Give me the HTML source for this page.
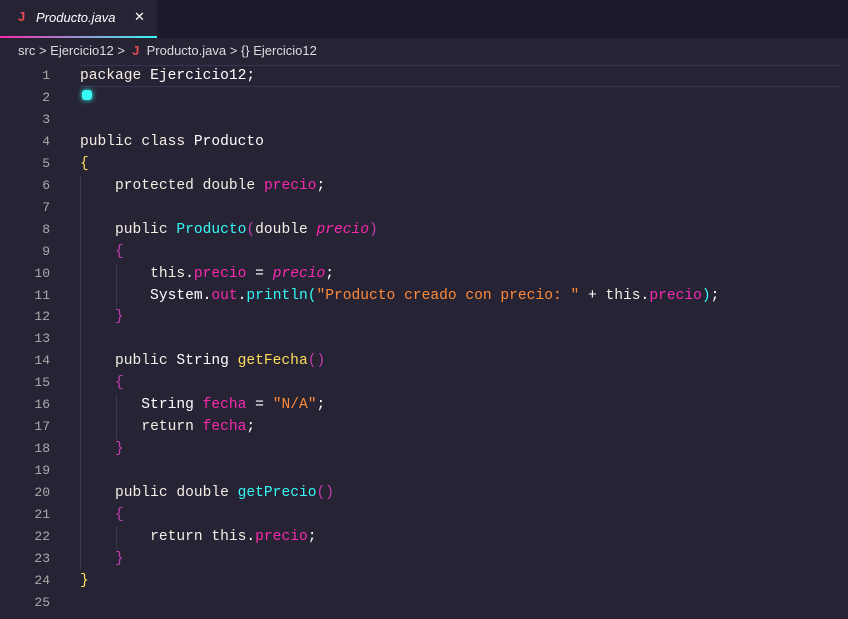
<!DOCTYPE html>
<html><head><style>
body{margin:0;width:848px;height:619px;background:#262335;overflow:hidden;font-family:"Liberation Mono",monospace;}
.tabs{position:absolute;left:0;top:0;width:848px;height:38px;background:#1e1a2c;}
.tab{position:absolute;left:0;top:0;width:157px;height:38px;background:#262335;}
.tab .ul{position:absolute;left:0;bottom:0;width:157px;height:2px;background:linear-gradient(90deg,#f92aad,#36f9f6);}
.tab span{position:absolute;top:10px;font-family:"Liberation Sans",sans-serif;font-size:13px;color:#fff;}
.bc{position:absolute;left:18px;top:43px;font-family:"Liberation Sans",sans-serif;font-size:13px;color:#ddd;white-space:pre;}
.j{color:#e34c4c;font-weight:bold}
.ln{position:absolute;left:0;width:50px;text-align:right;color:#aaa;font-size:13px;}
.code{position:absolute;left:80px;top:66px;font-size:14.6px;line-height:21.96px;color:#fff;white-space:pre;}
.k{color:#f4eee4}
.f{color:#f92aad}.fi{color:#f92aad;font-style:italic}
.m{color:#36f9f6}.s{color:#ff8b39}.y{color:#fede5d}.p{color:#c23eab}
.cur{position:absolute;left:79px;top:65px;width:760px;height:20px;border-top:1px solid #3a3450;border-bottom:1px solid #3a3450;}
.guide{position:absolute;width:1px;background:#3d3750;}
</style></head><body>
<div class="tabs"><div class="tab"><span class="j" style="left:18px;top:9px;color:#e34c4c">J</span><span style="left:36px;font-style:italic">Producto.java</span><span style="left:134px;top:9px">✕</span><div class="ul"></div></div></div>
<div class="bc">src &gt; Ejercicio12 &gt;  <span class="j">J</span>  Producto.java &gt; {} Ejercicio12</div>
<div class="cur"></div>
<div class="guide" style="left:80px;top:176px;height:394px"></div>
<div class="guide" style="left:116px;top:264px;height:44px"></div>
<div class="guide" style="left:116px;top:395px;height:44px"></div>
<div class="guide" style="left:116px;top:527px;height:22px"></div>
<div style="position:absolute;left:82px;top:90px;width:10px;height:10px;background:#36f9f6;border-radius:3px;box-shadow:0 0 6px #36f9f6"></div>
<div class="code"><span class="k">package</span> Ejercicio12;


<span class="k">public</span> <span class="k">class</span> Producto
<span class="y">{</span>
    <span class="k">protected</span> <span class="k">double</span> <span class="f">precio</span>;

    <span class="k">public</span> <span class="m">Producto</span><span class="p">(</span><span class="k">double</span> <span class="fi">precio</span><span class="p">)</span>
    <span class="p">{</span>
        <span class="k">this</span>.<span class="f">precio</span> = <span class="fi">precio</span>;
        System.<span class="f">out</span>.<span class="m">println</span><span class="m">(</span><span class="s">"Producto creado con precio: "</span> + <span class="k">this</span>.<span class="f">precio</span><span class="m">)</span>;
    <span class="p">}</span>

    <span class="k">public</span> String <span class="y">getFecha</span><span class="p">()</span>
    <span class="p">{</span>
       String <span class="f">fecha</span> = <span class="s">"N/A"</span>;
       <span class="k">return</span> <span class="f">fecha</span>;
    <span class="p">}</span>

    <span class="k">public</span> <span class="k">double</span> <span class="m">getPrecio</span><span class="p">()</span>
    <span class="p">{</span>
        <span class="k">return</span> <span class="k">this</span>.<span class="f">precio</span>;
    <span class="p">}</span>
<span class="y">}</span>
</div>
<div class="ln" style="top:65px;line-height:21.96px;white-space:pre">1
2
3
4
5
6
7
8
9
10
11
12
13
14
15
16
17
18
19
20
21
22
23
24
25</div>
</body></html>
